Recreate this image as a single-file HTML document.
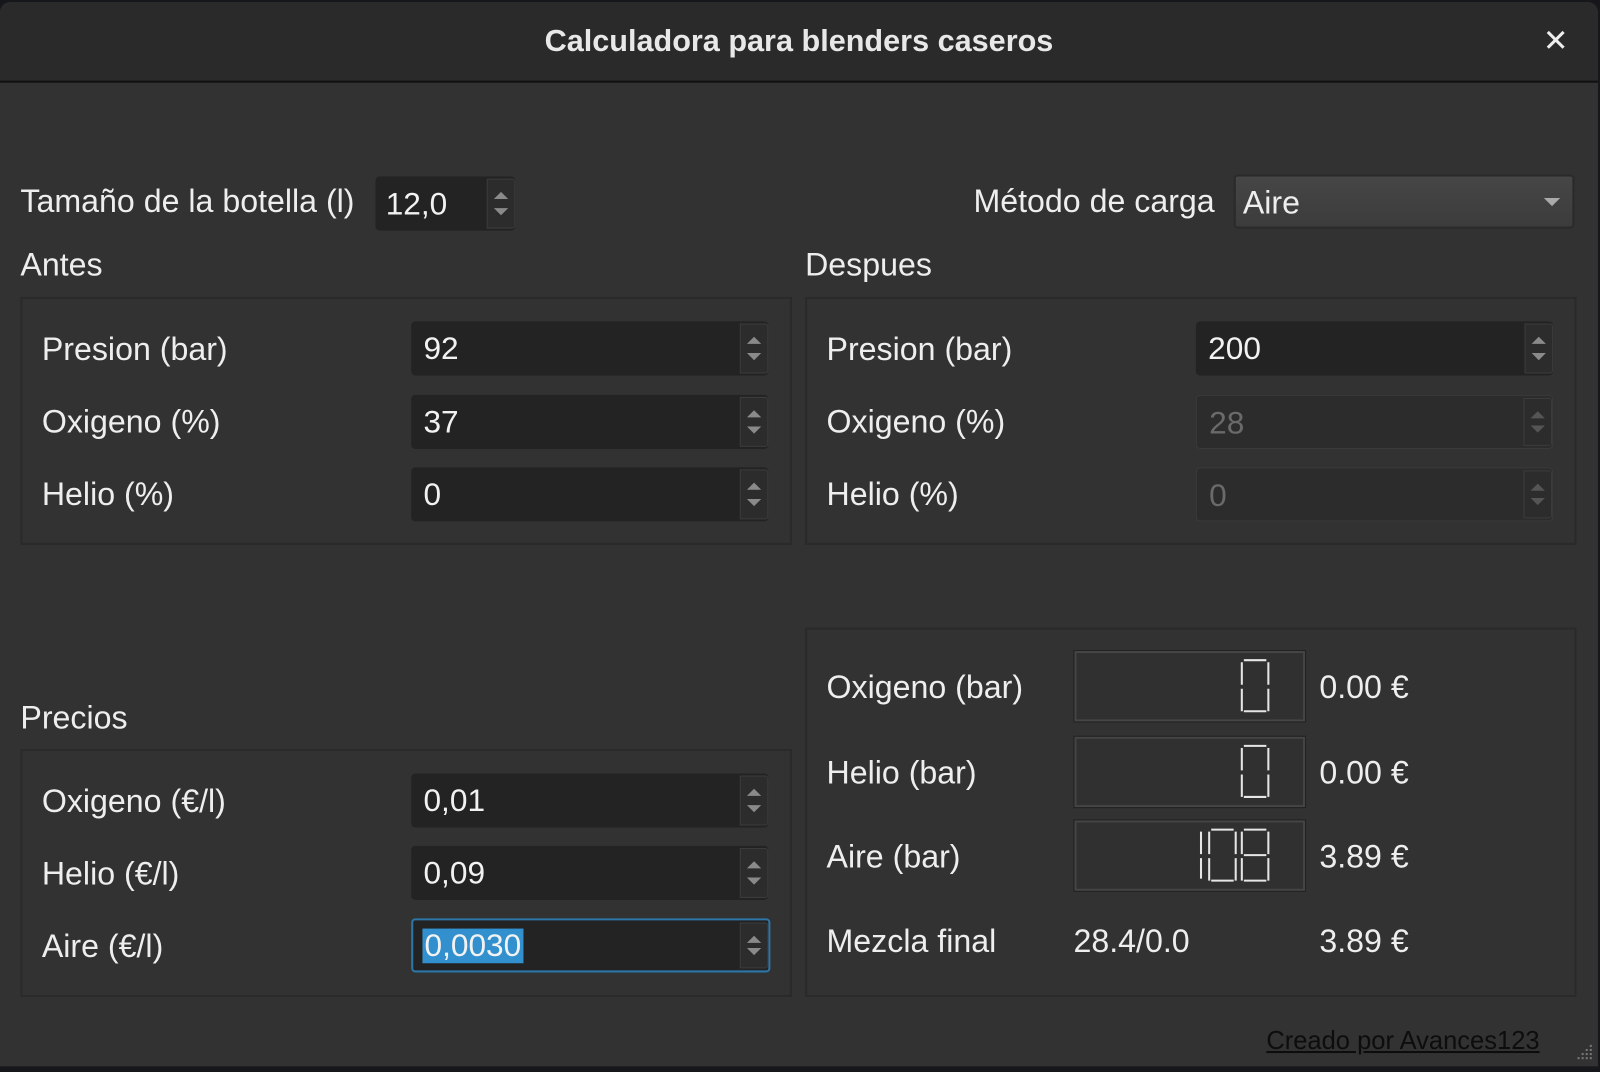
<!DOCTYPE html>
<html><head><meta charset="utf-8"><style>
*{margin:0;padding:0;box-sizing:border-box}
body{width:1600px;height:1072px;background:#15171a;position:relative;overflow:hidden;font-family:"Liberation Sans","DejaVu Sans",sans-serif;color:#eeeeee}
#s{position:absolute;left:0;top:0;width:1568px;height:1051px;transform:scale(1.0204);transform-origin:0 0}
.win{position:absolute;left:0;top:2px;width:1566px;height:1043px;background:#323232;border-radius:10px 10px 0 0;overflow:hidden}
.title{position:absolute;left:0;top:0;width:100%;height:79px;background:#2a2a2a;border-bottom:2px solid #111}
.title span{position:absolute;left:0;width:100%;top:22px;text-align:center;font-size:30px;font-weight:bold;color:#e8e8e8}
.x{position:absolute;left:1512px;top:28px;font-size:30px;font-weight:bold;color:#eee;line-height:22px}
.t{position:absolute;font-size:31.5px;line-height:34px;color:#eee;white-space:nowrap}
.box{position:absolute;border:2px solid #2a2a2a}
.in{position:absolute;background:#232323;border-radius:4px;height:53px}
.in .v{position:absolute;left:12px;top:10px;font-size:31px;line-height:34px;color:#f2f2f2}
.sp{position:absolute;right:0;top:2px;bottom:2px;width:28px;background:#2c2c2c;border:1px solid #3b3b3b;border-radius:0 3px 3px 0}
.sp:before,.sp:after{content:"";position:absolute;left:6px;border-left:7px solid transparent;border-right:7px solid transparent}
.sp:before{top:12px;border-bottom:7px solid #8a8a8a}
.sp:after{bottom:12px;border-top:7px solid #8a8a8a}
.dis .v{color:#6a6a6a}
.dis{background:#2c2c2c;border:1px solid #3a3a3a}
.dis .sp:before{border-bottom-color:#555}.dis .sp:after{border-top-color:#555}
.lcd{position:absolute;left:1053px;width:226px;height:69px;border:2px solid #454545;outline:1px solid #222;background:#303030}
</style></head><body>
<div id="s">
<div class="win">
<div class="title"><span>Calculadora para blenders caseros</span><div class="x">✕</div></div>

<div class="t" style="left:20px;top:178px">Tamaño de la botella (l)</div>
<div class="in" style="left:368px;top:171px;width:137px"><div class="v" style="left:10px">12,0</div><div class="sp"></div></div>
<div class="t" style="left:954px;top:178px">Método de carga</div>
<div style="position:absolute;left:1209px;top:169px;width:334px;height:53px;border:2px solid #2a2a2a;border-radius:4px;background:linear-gradient(#464646,#3c3c3c)"><div class="t" style="left:7px;top:8px">Aire</div><div style="position:absolute;right:12px;top:21px;border-left:8px solid transparent;border-right:8px solid transparent;border-top:8px solid #aaa"></div></div>

<div class="t" style="left:20px;top:240px">Antes</div>
<div class="t" style="left:789px;top:240px">Despues</div>
<div class="box" style="left:20px;top:289px;width:756px;height:243px"></div>
<div class="box" style="left:789px;top:289px;width:756px;height:243px"></div>

<div class="t" style="left:41px;top:323px">Presion (bar)</div>
<div class="t" style="left:41px;top:394px">Oxigeno (%)</div>
<div class="t" style="left:41px;top:465px">Helio (%)</div>
<div class="in" style="left:403px;top:313px;width:350px"><div class="v">92</div><div class="sp"></div></div>
<div class="in" style="left:403px;top:385px;width:350px"><div class="v">37</div><div class="sp"></div></div>
<div class="in" style="left:403px;top:456px;width:350px"><div class="v">0</div><div class="sp"></div></div>

<div class="t" style="left:810px;top:323px">Presion (bar)</div>
<div class="t" style="left:810px;top:394px">Oxigeno (%)</div>
<div class="t" style="left:810px;top:465px">Helio (%)</div>
<div class="in" style="left:1172px;top:313px;width:350px"><div class="v">200</div><div class="sp"></div></div>
<div class="in dis" style="left:1172px;top:385px;width:350px"><div class="v">28</div><div class="sp"></div></div>
<div class="in dis" style="left:1172px;top:456px;width:350px"><div class="v">0</div><div class="sp"></div></div>

<div class="t" style="left:20px;top:684px">Precios</div>
<div class="box" style="left:20px;top:732px;width:756px;height:243px"></div>
<div class="t" style="left:41px;top:766px">Oxigeno (€/l)</div>
<div class="t" style="left:41px;top:837px">Helio (€/l)</div>
<div class="t" style="left:41px;top:908px">Aire (€/l)</div>
<div class="in" style="left:403px;top:756px;width:350px"><div class="v">0,01</div><div class="sp"></div></div>
<div class="in" style="left:403px;top:827px;width:350px"><div class="v">0,09</div><div class="sp"></div></div>
<div class="in" style="left:403px;top:898px;width:352px;border:2px solid #2d76a8"><div class="v" style="left:9px;top:8px;background:#3190cd;padding:0 2px">0,0030</div><div class="sp"></div></div>

<div class="box" style="left:789px;top:613px;width:756px;height:362px"></div>
<div class="t" style="left:810px;top:654px">Oxigeno (bar)</div>
<div class="t" style="left:810px;top:738px">Helio (bar)</div>
<div class="t" style="left:810px;top:820px">Aire (bar)</div>
<div class="t" style="left:810px;top:903px">Mezcla final</div>
<div class="lcd" style="top:636px"></div>
<div class="lcd" style="top:720px"></div>
<div class="lcd" style="top:802px"></div>
<svg style="position:absolute;left:0;top:0" width="1564" height="1062" fill="none" stroke="#e6e6e6" stroke-width="2">
<path d="M1219 645h22M1217 647v22M1243 647v22M1217 673v22M1243 673v22M1219 695h22"/>
<path d="M1219 729h22M1217 731v22M1243 731v22M1217 757v22M1243 757v22M1219 779h22"/>
<path d="M1177 813v22M1177 839v20"/>
<path d="M1187 811h22M1185 813v22M1211 813v22M1185 839v22M1211 839v22M1187 861h22"/>
<path d="M1219 811h22M1217 813v22M1243 813v22M1219 836h22M1217 839v22M1243 839v22M1219 861h22"/>
</svg>
<div class="t" style="left:1293px;top:654px">0.00 €</div>
<div class="t" style="left:1293px;top:738px">0.00 €</div>
<div class="t" style="left:1293px;top:820px">3.89 €</div>
<div class="t" style="left:1052px;top:903px">28.4/0.0</div>
<div class="t" style="left:1293px;top:903px">3.89 €</div>

<div class="t" style="left:1241px;top:1001px;font-size:25px;color:#0d0d0d;text-decoration:underline">Creado por Avances123</div>
<svg style="position:absolute;left:1540px;top:1018px" width="24" height="24" fill="#777"><rect x="18" y="4" width="2" height="2"/><rect x="14" y="8" width="2" height="2"/><rect x="18" y="8" width="2" height="2"/><rect x="10" y="12" width="2" height="2"/><rect x="14" y="12" width="2" height="2"/><rect x="18" y="12" width="2" height="2"/><rect x="6" y="16" width="2" height="2"/><rect x="10" y="16" width="2" height="2"/><rect x="14" y="16" width="2" height="2"/><rect x="18" y="16" width="2" height="2"/></svg>
</div>
</div>
</body></html>
